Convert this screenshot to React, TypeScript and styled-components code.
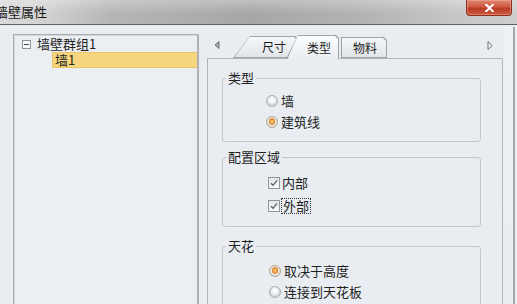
import React from "react";
import styled, { createGlobalStyle } from "styled-components";

const GlobalStyle = createGlobalStyle`
  html, body {
    margin: 0;
    padding: 0;
    background: #e9edf1;
  }
  body {
    font-family: "Noto Sans CJK SC", "Liberation Sans", sans-serif;
    color: #1f1f1f;
  }
`;

const Window = styled.div`
  width: 517px;
  height: 304px;
  display: flex;
  flex-direction: column;
  overflow: hidden;
  background: #e9edf1;
`;

const TitleBar = styled.div`
  height: 24px;
  flex: none;
  display: flex;
  justify-content: space-between;
  align-items: flex-start;
  border-bottom: 1px solid #5f6062;
  background: linear-gradient(to bottom, rgba(255, 255, 255, 0.28), rgba(255, 255, 255, 0) 55%),
    linear-gradient(
      to right,
      #dadada 0,
      #d2d2d2 45px,
      #b6b6b6 110px,
      #a7a7a7 250px,
      #b3b3b3 360px,
      #c9c9c9 470px,
      #cccccc 517px
    );
`;

const Title = styled.span`
  margin-left: -5px;
  font-size: 13px;
  line-height: 24px;
  color: #181818;
`;

const CloseButton = styled.div`
  width: 44px;
  height: 15px;
  margin-right: 5px;
  display: flex;
  align-items: center;
  justify-content: center;
  border: 1px solid #8e2f20;
  border-top: none;
  border-radius: 0 0 4px 4px;
  background: linear-gradient(to bottom, #e08570 0, #d05a43 45%, #bb3a24 55%, #c95a40 100%);
  box-shadow: inset 0 0 0 1px rgba(255, 200, 190, 0.35);
`;

const Body = styled.div`
  flex: 1;
  min-height: 0;
  display: flex;
  padding-left: 13px;
`;

const TreePanel = styled.div`
  width: 183px;
  margin-top: 9px;
  display: flex;
  flex-direction: column;
  border: 1px solid #a9adb2;
  border-right: 2px solid #aeb2b6;
  border-bottom: none;
  box-shadow: inset 1px 1px 0 #d3d7db;
  background: #ebeef2;
  padding-top: 2px;
  font-size: 13px;
`;

const TreeRow = styled.div<{ $indent: number; $selected?: boolean }>`
  height: 14px;
  margin-left: ${(p) => p.$indent}px;
  display: flex;
  align-items: center;
  line-height: 14px;
  padding-left: ${(p) => (p.$selected ? 2 : 0)}px;
  background: ${(p) => (p.$selected ? "#f6d67e" : "transparent")};
  border: ${(p) => (p.$selected ? "1px solid #ebc466" : "none")};
  border-right: none;
  margin-top: ${(p) => (p.$selected ? 1 : 0)}px;
`;

const Expander = styled.span`
  width: 7px;
  height: 7px;
  margin-right: 6px;
  border: 1px solid #8f9397;
  background: #f7f8f9;
  display: flex;
  align-items: center;
  justify-content: center;
  &::after {
    content: "";
    width: 5px;
    height: 1px;
    background: #4a4a4a;
  }
`;

const TabArea = styled.div`
  width: 296px;
  margin-left: 8px;
  display: flex;
  flex-direction: column;
`;

const TabStrip = styled.div`
  height: 33px;
  flex: none;
  display: flex;
  align-items: flex-end;
  padding-left: 7px;
`;

const ArrowButton = styled.span<{ $push?: boolean }>`
  width: 6px;
  height: 24px;
  display: flex;
  align-items: center;
  margin-left: ${(p) => (p.$push ? "auto" : "0")};
  margin-right: ${(p) => (p.$push ? "10px" : "13px")};
  margin-bottom: 1px;
`;

const Tab = styled.div<{ $slant: number; $active?: boolean; $h: number; $w: number; $gap: number; $z: number }>`
  position: relative;
  z-index: ${(p) => p.$z};
  width: ${(p) => p.$w}px;
  height: ${(p) => p.$h}px;
  margin-left: ${(p) => p.$gap}px;
  margin-bottom: ${(p) => (p.$active ? -1 : 0)}px;
  display: flex;
  padding: 1px 1px 0 0;
  box-sizing: border-box;
  background: #9ea3a9;
  clip-path: polygon(0 100%, ${(p) => p.$slant}px 0, calc(100% - 3px) 0, 100% 3px, 100% 100%);
`;

const TabFill = styled.div<{ $slant: number; $active?: boolean; $pad: number }>`
  flex: 1;
  display: flex;
  align-items: center;
  padding-left: ${(p) => p.$pad}px;
  font-size: 12px;
  line-height: 14px;
  color: #1e1e1e;
  background: ${(p) =>
    p.$active
      ? "linear-gradient(to bottom, #fbfcfd, #e9edf1)"
      : "linear-gradient(to bottom, #f6f7f9, #e1e5e9)"};
  clip-path: polygon(
    ${(p) => (p.$slant ? "1.5px" : "1px")} 100%,
    ${(p) => (p.$slant ? p.$slant - 0.5 : 1)}px 0,
    calc(100% - 3px) 0,
    100% 3px,
    100% 100%
  );
  margin-bottom: ${(p) => (p.$active ? 0 : 1)}px;
`;

const TabPage = styled.div`
  flex: 1;
  display: flex;
  flex-direction: column;
  border: 1px solid #b2b6bb;
  border-bottom: none;
  box-shadow: 2px 0 0 #d8dce0;
  padding: 12px 21px 0 14px;
  background: #e9edf1;
`;

const Group = styled.fieldset<{ $top: number }>`
  margin: ${(p) => p.$top}px 0 0 0;
  padding: 0 0 9px 0;
  border: 1px solid #c3c7cc;
  border-radius: 3px;
  min-width: 0;
`;

const Legend = styled.legend`
  margin-left: 3px;
  padding: 0 2px;
  font-size: 13px;
  line-height: 14px;
  color: #1f1f1f;
`;

const Options = styled.div<{ $indent: number; $padTop: number }>`
  display: flex;
  flex-direction: column;
  padding: ${(p) => p.$padTop}px 0 0 ${(p) => p.$indent}px;
`;

const OptionRow = styled.div<{ $h: number }>`
  height: ${(p) => p.$h}px;
  display: flex;
  align-items: center;
  font-size: 13px;
  line-height: 14px;
  color: #222;
`;

const Radio = styled.span<{ $checked?: boolean }>`
  width: 10px;
  height: 10px;
  margin-right: 3px;
  border-radius: 50%;
  border: 1px solid ${(p) => (p.$checked ? "#b9a48a" : "#a9adb2")};
  background: ${(p) =>
    p.$checked
      ? "radial-gradient(circle at 50% 45%, #fbd38c 0, #ee9c3e 2px, #d9852e 3px, #eef0f2 3.6px, #d6d9dc 5px)"
      : "radial-gradient(circle at 50% 40%, #ffffff 0, #f0f2f4 3px, #d2d5d9 5px)"};
`;

const Checkbox = styled.span`
  width: 10px;
  height: 10px;
  margin-right: 2px;
  border: 1px solid #8f959b;
  background: linear-gradient(to bottom, #e4e7ea, #f8f9fa);
  display: flex;
  align-items: center;
  justify-content: center;
`;

const FocusLabel = styled.span`
  outline: 1px dotted #333;
  outline-offset: 0;
  padding: 0 1px;
`;

const Gutter = styled.div`
  width: 10px;
  margin-top: 2px;
  border-right: 2px solid #a5a8ab;
  margin-right: 2px;
  background: linear-gradient(to bottom, #eef1f4, #e9edf1);
`;

const Check = () => (
  <svg width="8" height="8" viewBox="0 0 8 8">
    <polyline points="1,4.2 3,6.3 7,1.3" fill="none" stroke="#5b6067" strokeWidth="1.3" />
  </svg>
);

const CloseGlyph = () => (
  <svg width="9" height="8" viewBox="0 0 9 8">
    <path d="M1 0.5 L8 7.5 M8 0.5 L1 7.5" stroke="#ffffff" strokeWidth="2" strokeLinecap="square" />
  </svg>
);

const LeftArrow = () => (
  <svg width="6" height="8" viewBox="0 0 6 8">
    <path d="M5 0.5 L1 4 L5 7.5 Z" fill="#a8adb3" stroke="#6d7278" strokeWidth="1" />
  </svg>
);

const RightArrow = () => (
  <svg width="6" height="9" viewBox="0 0 6 9">
    <path d="M1 0.5 L5.2 4.5 L1 8.5 Z" fill="#f3f4f6" stroke="#6d7278" strokeWidth="1" />
  </svg>
);

const tabs = [
  { label: "尺寸", slant: 17, w: 65, h: 22, gap: 0, pad: 29, z: 1 },
  { label: "类型", slant: 12, w: 53, h: 24, gap: -12, pad: 21, z: 3, active: true },
  { label: "物料", slant: 0, w: 46, h: 21, gap: 2, pad: 12, z: 1 },
];

export default function App() {
  return (
    <>
      <GlobalStyle />
      <Window>
        <TitleBar>
          <Title>墙壁属性</Title>
          <CloseButton>
            <CloseGlyph />
          </CloseButton>
        </TitleBar>
        <Body>
          <TreePanel>
            <TreeRow $indent={8}>
              <Expander />
              墙壁群组1
            </TreeRow>
            <TreeRow $indent={38} $selected>
              墙1
            </TreeRow>
          </TreePanel>
          <TabArea>
            <TabStrip>
              <ArrowButton>
                <LeftArrow />
              </ArrowButton>
              {tabs.map((t) => (
                <Tab
                  key={t.label}
                  $slant={t.slant}
                  $active={t.active}
                  $w={t.w}
                  $h={t.h}
                  $gap={t.gap}
                  $z={t.z}
                >
                  <TabFill $slant={t.slant} $active={t.active} $pad={t.pad}>
                    {t.label}
                  </TabFill>
                </Tab>
              ))}
              <ArrowButton $push>
                <RightArrow />
              </ArrowButton>
            </TabStrip>
            <TabPage>
              <Group $top={0}>
                <Legend>类型</Legend>
                <Options $indent={43} $padTop={5}>
                  <OptionRow $h={21}>
                    <Radio />
                    墙
                  </OptionRow>
                  <OptionRow $h={21}>
                    <Radio $checked />
                    建筑线
                  </OptionRow>
                </Options>
              </Group>
              <Group $top={8}>
                <Legend>配置区域</Legend>
                <Options $indent={45} $padTop={7}>
                  <OptionRow $h={23}>
                    <Checkbox>
                      <Check />
                    </Checkbox>
                    内部
                  </OptionRow>
                  <OptionRow $h={23}>
                    <Checkbox>
                      <Check />
                    </Checkbox>
                    <FocusLabel>外部</FocusLabel>
                  </OptionRow>
                </Options>
              </Group>
              <Group $top={12}>
                <Legend>天花</Legend>
                <Options $indent={46} $padTop={7}>
                  <OptionRow $h={21}>
                    <Radio $checked />
                    取决于高度
                  </OptionRow>
                  <OptionRow $h={21}>
                    <Radio />
                    连接到天花板
                  </OptionRow>
                </Options>
              </Group>
            </TabPage>
          </TabArea>
          <Gutter />
        </Body>
      </Window>
    </>
  );
}
